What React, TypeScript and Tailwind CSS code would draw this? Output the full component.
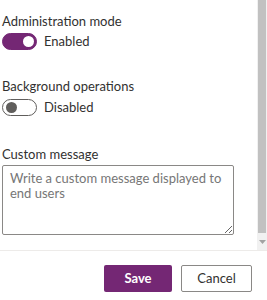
import React, { useState } from "react";

const font = { fontFamily: '"Lato", "Open Sans", sans-serif' };

interface ToggleProps {
  checked: boolean;
  onChange: (v: boolean) => void;
  onText: string;
  offText: string;
}

const Toggle: React.FC<ToggleProps> = ({ checked, onChange, onText, offText }) => (
  <button
    type="button"
    onClick={() => onChange(!checked)}
    className="flex items-center gap-[7px] h-[18px] cursor-pointer"
  >
    <span
      className={
        checked
          ? "relative w-[35px] h-[17px] rounded-full bg-[#742774] border border-[#742774]"
          : "relative w-[35px] h-[17px] rounded-full bg-white border border-[#605e5c]"
      }
    >
      <span
        className={
          checked
            ? "absolute top-[2px] right-[2px] w-[11px] h-[11px] rounded-full bg-white"
            : "absolute top-[2px] left-[3px] w-[11px] h-[11px] rounded-full bg-[#605e5c]"
        }
      />
    </span>
    <span className="text-[13px] leading-[18px] text-[#323130]">
      {checked ? onText : offText}
    </span>
  </button>
);

export default function App() {
  const [adminMode, setAdminMode] = useState(true);
  const [bgOps, setBgOps] = useState(false);

  return (
    <div className="w-[267px] h-[300px] bg-white flex flex-col" style={font}>
      <div className="flex h-[250px]">
        <div className="flex-1 pl-[2px] pt-[12px] flex flex-col">
          <label className="text-[13px] leading-[18px] text-[#323130]">
            Administration mode
          </label>
          <div className="mt-[2px]">
            <Toggle checked={adminMode} onChange={setAdminMode} onText="Enabled" offText="Disabled" />
          </div>

          <label className="mt-[27px] text-[13px] leading-[18px] text-[#323130]">
            Background operations
          </label>
          <div className="mt-[3px]">
            <Toggle checked={bgOps} onChange={setBgOps} onText="Enabled" offText="Disabled" />
          </div>

          <label className="mt-[29px] text-[13px] leading-[18px] text-[#323130]">
            Custom message
          </label>
          <textarea
            className="mt-[2px] w-[232px] h-[70px] border border-[#8a8886] rounded-[2px] px-[7px] pt-[5px] pb-[4px] text-[13px] leading-[15px] text-[#323130] placeholder:text-[#767676] outline-none"
            placeholder="Write a custom message displayed to end users"
          />
        </div>
        <div className="w-[10px] bg-[#f1f1f1] flex flex-col">
          <div className="h-[233px] bg-[#c1c1c1] mx-[1px]" />
          <div className="flex-1 flex items-center justify-center">
            <svg width="7" height="4" viewBox="0 0 7 4">
              <path d="M0 0 L7 0 L3.5 4 Z" fill="#a3a3a3" />
            </svg>
          </div>
        </div>
      </div>
      <div className="border-t border-[#edebe9] flex-1 flex items-start justify-end gap-[9px] pr-[15px] pt-[14px]">
        <button className="w-[68px] h-[27px] rounded-[2px] bg-[#742774] text-white text-[13px] font-bold">
          Save
        </button>
        <button className="w-[71px] h-[27px] rounded-[2px] border border-[#8a8886] bg-white text-[#323130] text-[13px]">
          Cancel
        </button>
      </div>
    </div>
  );
}
